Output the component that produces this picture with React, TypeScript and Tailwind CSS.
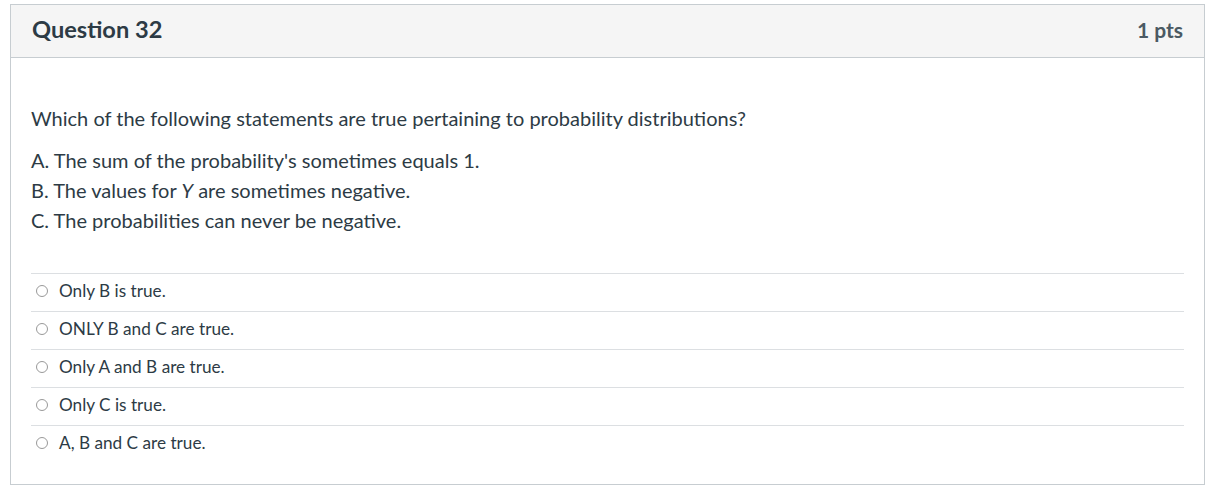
import React from "react";

const answers = [
  "Only B is true.",
  "ONLY B and C are true.",
  "Only A and B are true.",
  "Only C is true.",
  "A, B and C are true.",
];

export default function App() {
  return (
    <div
      className="w-[1212px] h-[492px] bg-white pl-[10px] pt-[4px]"
      style={{ fontFamily: "Lato, 'Open Sans', sans-serif" }}
    >
      <div className="w-[1195px] h-[481px] border border-[#c7cdd1] flex flex-col">
        <div className="h-[53px] bg-[#f5f5f5] border-b border-[#c7cdd1] flex items-center justify-between px-[21px] pb-[3px]">
          <div className="text-[23.6px] font-bold text-[#2d3b45]">Question 32</div>
          <div className="text-[21px] font-bold text-[#4b5a63]">1 pts</div>
        </div>
        <div className="px-[20px] pt-[45px] text-[#2d3b45]">
          <p className="text-[20px] leading-[30px]">
            Which of the following statements are true pertaining to probability distributions?
          </p>
          <div className="mt-[12px] text-[20px] leading-[30px]">
            <div>A. The sum of the probability's sometimes equals 1.</div>
            <div>
              B. The values for <i>Y</i> are sometimes negative.
            </div>
            <div>C. The probabilities can never be negative.</div>
          </div>
          <div className="mt-[38px]">
            {answers.map((a) => (
              <div
                key={a}
                className="h-[38px] border-t border-[#dcdfe2] flex items-center pl-[5px] pb-[3px]"
              >
                <span className="w-[12px] h-[12px] rounded-full border border-[#999999] bg-white mr-[11px] shrink-0" />
                <span className="text-[17.2px] text-[#2d3b45]">{a}</span>
              </div>
            ))}
          </div>
        </div>
      </div>
    </div>
  );
}
